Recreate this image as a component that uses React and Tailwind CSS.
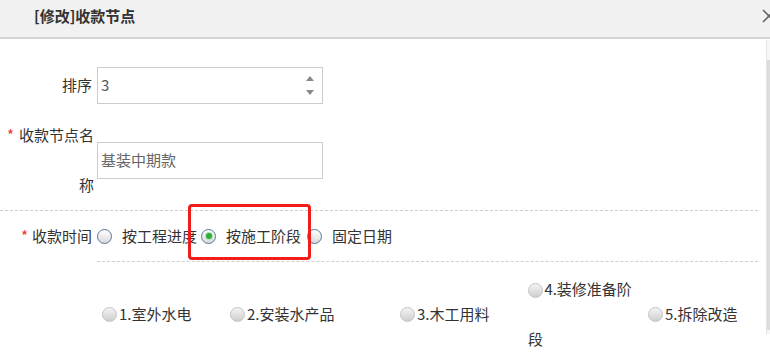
import React from "react";

function BigRadio({ checked }) {
  return (
    <span className="relative inline-flex h-[15px] w-[15px] shrink-0 items-center justify-center rounded-full border border-[#56789c] bg-gradient-to-b from-[#ffffff] to-[#d9d9d9]">
      {checked ? <span className="h-[6px] w-[6px] rounded-full bg-[#2fae36] shadow-[0_0_0_1px_#b7e0b9]" /> : null}
    </span>
  );
}

function SmallRadio() {
  return (
    <span className="inline-block h-[15px] w-[15px] shrink-0 rounded-full border border-[#c4c4c4] bg-gradient-to-b from-[#f4f4f4] to-[#cfcfcf] align-middle" />
  );
}

const stages = [
  { text: "1.室外水电", w: "w-[128px]" },
  { text: "2.安装水产品", w: "w-[170px]" },
  { text: "3.木工用料", w: "w-[128px]" },
];

export default function App() {
  return (
    <div className="relative h-[363px] w-[770px] overflow-hidden bg-white text-[15px] text-[#333]" style={{ fontFamily: '"Noto Sans CJK SC", "Noto Sans", sans-serif' }}>
      <div className="relative h-[39px] border-b-2 border-[#d4d4d4] bg-[#f1f1f1]">
        <div className="pl-[34px] pt-[6px] text-[15px] font-bold leading-[20px] text-[#333]">[修改]收款节点</div>
        <svg className="absolute right-[-6px] top-[9px]" width="14" height="14" viewBox="0 0 14 14">
          <path d="M1 1 L13 13 M13 1 L1 13" stroke="#666" strokeWidth="1.6" fill="none" />
        </svg>
      </div>

      <div className="absolute right-0 top-[40px] h-[294px] w-[4px] border-l border-[#e4e4e4] bg-[#f7f7f7]">
        <div className="mt-[20px] h-[270px] w-full bg-[#dcdcdc]" />
      </div>

      <div className="w-[758px] pt-[28px]">
        <div className="flex h-[37px] items-center">
          <div className="w-[97px] pr-[5px] text-right">排序</div>
          <div className="flex h-[37px] w-[226px] items-center justify-between border border-[#cccccc] pl-[3px] pr-[8px] text-[#555]">
            <span>3</span>
            <div className="flex flex-col items-center gap-[9px]">
              <span className="h-0 w-0 border-x-[4px] border-b-[5px] border-x-transparent border-b-[#888]" />
              <span className="h-0 w-0 border-x-[4px] border-t-[5px] border-x-transparent border-t-[#888]" />
            </div>
          </div>
        </div>

        <div className="mt-[6px] flex items-center">
          <div className="w-[97px] pl-[4px] pr-[3px] text-right leading-[50px]">
            <span className="mr-[5px] text-[#e33]">*</span>收款节点名称
          </div>
          <div className="flex h-[37px] w-[226px] items-center border border-[#cccccc] pl-[3px] text-[#666]">基装中期款</div>
        </div>

        <div className="border-t border-dashed border-[#cfcfcf]" />

        <div className="relative flex h-[50px] items-center">
          <div className="w-[97px] pr-[5px] text-right">
            <span className="mr-[4px] text-[#e33]">*</span>收款时间
          </div>
          <div className="flex items-center gap-[4px]">
            <label className="flex items-center gap-[10px]"><BigRadio /><span>按工程进度</span></label>
            <label className="flex items-center gap-[10px]"><BigRadio checked /><span>按施工阶段</span></label>
            <label className="ml-[2px] flex items-center gap-[10px]"><BigRadio /><span>固定日期</span></label>
          </div>
          <div className="absolute left-[188px] top-[-7px] h-[56px] w-[123px] rounded-[4px] border-[3px] border-[#f01d1d]" />
        </div>

        <div className="ml-[97px] border-t border-dashed border-[#cfcfcf]" />

        <div className="flex items-center pl-[102px] pt-[2px] leading-[50px]">
          {stages.map((s) => (
            <div key={s.text} className={`${s.w} flex items-center gap-[2px]`}>
              <SmallRadio />
              <span>{s.text}</span>
            </div>
          ))}
          <div className="w-[120px]">
            <div className="w-[108px]">
              <SmallRadio /> <span className="ml-[-2px]">4.装修准备阶段</span>
            </div>
          </div>
          <div className="flex items-center gap-[2px]">
            <SmallRadio />
            <span>5.拆除改造</span>
          </div>
        </div>
      </div>
    </div>
  );
}
